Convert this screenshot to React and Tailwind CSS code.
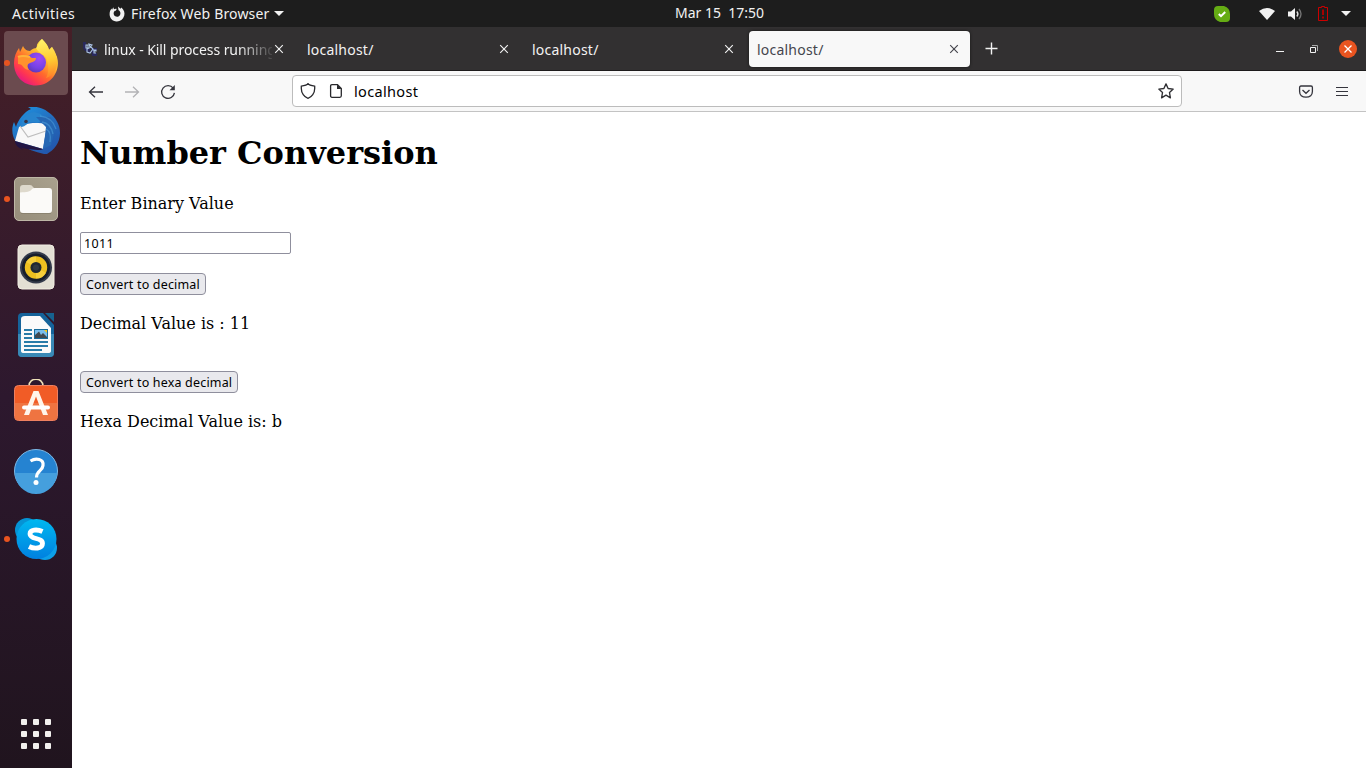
import React from 'react';

const UI = 'font-["Noto_Sans",sans-serif]';

function DockItem({ children, running, active }) {
  return (
    <div className="relative flex h-[68px] w-[72px] shrink-0 items-center justify-center">
      {active && <span className="absolute left-1 top-0.5 h-16 w-16 rounded bg-[#6b4b4f]" />}
      {running && <span className="absolute left-1 top-[31px] h-1.5 w-1.5 rounded-full bg-[#e95420]" />}
      <svg className="relative h-12 w-12" viewBox="0 0 48 48" fill="none">{children}</svg>
    </div>
  );
}

function Firefox() {
  return (
    <>
      <defs>
        <linearGradient id="ffBody" x1="40" y1="6" x2="10" y2="44" gradientUnits="userSpaceOnUse">
          <stop stopColor="#fff44f" />
          <stop offset=".3" stopColor="#ffbd2f" />
          <stop offset=".58" stopColor="#ff6b2c" />
          <stop offset=".8" stopColor="#ff3750" />
          <stop offset="1" stopColor="#e31587" />
        </linearGradient>
        <radialGradient id="ffGlobe" cx=".65" cy=".3" r=".8">
          <stop stopColor="#a04af5" />
          <stop offset=".6" stopColor="#7542e5" />
          <stop offset="1" stopColor="#5b35b0" />
        </radialGradient>
        <linearGradient id="ffTail" x1="32" y1="0" x2="40" y2="36" gradientUnits="userSpaceOnUse">
          <stop stopColor="#fff36b" />
          <stop offset=".6" stopColor="#ffc931" />
          <stop offset="1" stopColor="#ff8a2a" />
        </linearGradient>
      </defs>
      <path d="M30 0C33 3 36 6 37 11L40 8C41 11 43 14 45 18C49 32 39 46.500 24 46.500C11 46.500 2 37 2 24C2 18 4 13 7 9L8 13L11 7C12 9 14 12 18 12C20 10 22 9 25 9C24 6 26 3 30 0Z" fill="url(#ffBody)" />
      <path d="M30 0C33 4 36 6 37 11L40 8C49 20 46 35 34 39C38 32 36 23 34 18C30 15 26 13 24 9C26 7 27 3 30 0Z" fill="url(#ffTail)" />
      <circle cx="24" cy="23.500" r="10" fill="url(#ffGlobe)" />
      <path d="M6 19C12 14 17 17 20 19L24 19C24 22 21 23 18 24C15 25 15 28 17 31C10 30 12 25 6 25Z" fill="#ff922d" />
      <path d="M6 18C10 16 14 17 18 18" stroke="#ffb13b" strokeWidth="2" />
    </>
  );
}

function Thunderbird() {
  return (
    <>
      <defs>
        <linearGradient id="tbBody" x1="12" y1="2" x2="40" y2="44" gradientUnits="userSpaceOnUse">
          <stop stopColor="#1e8cdb" />
          <stop offset=".5" stopColor="#2469ba" />
          <stop offset="1" stopColor="#2257ad" />
        </linearGradient>
      </defs>
      <path d="M19 2L16 0C22-1 30 0 36 5C44 10 48 18 48 26C48 36 42 43 35 47L32 47C23 45 15 42 8 37L5 36C0 30-1 22 2 15L4 20C6 13 12 5 19 2Z" fill="url(#tbBody)" />
      <path d="M3 34L7 20L13 18C18 15 29 16 34 17L34 24L31 42Z" fill="#f8f8f8" />
      <path d="M8 19L16 30L34 24" stroke="#bdbdbd" strokeWidth="1.2" />
      <path d="M3 34L31 42L29 43C20 43 12 42 8 40L12 43C6 41 3 38 3 34Z" fill="#211544" />
      <path d="M9 20C9 12 14 6 22 5L29 7C31 11 29 15 25 16C19 14 16 15 15 17C13 19 11 20 9 20Z" fill="#2784ce" />
      <circle cx="14" cy="14.500" r="1.800" fill="#373448" />
      <path d="M24 10L39 10L43 23L39 38L31 42L33 29L34 20L29 15Z" fill="#2567b4" />
      <path d="M28 9C37 10 42 15 44 22M30 15C37 16 40 22 41 27M34 22C38 24 39 29 38 35" stroke="#4b9bd9" strokeWidth="1.300" opacity=".6" />
    </>
  );
}

function Files() {
  return (
    <>
      <defs><linearGradient id="filesBg" x1="0" y1="48" x2="48" y2="0" gradientUnits="userSpaceOnUse"><stop stopColor="#958c79" /><stop offset="1" stopColor="#aaa28f" /></linearGradient></defs>
      <rect x="2.5" y="2.5" width="43" height="43" rx="4.5" fill="url(#filesBg)" stroke="#beb7a6" />
      <path d="M8 13Q8 10 11 10H18Q20 10 21 12L23 14H30V25H8Z" fill="#ded9cc" />
      <path d="M8 17.5C15 17 18 17 20 14Q21 13 23 13H37Q40 13 40 16V35Q40 38 37 38H11Q8 38 8 35Z" fill="#fbfaf8" />
      <path d="M9 38.5H39" stroke="#817967" opacity=".65" />
    </>
  );
}

function Rhythmbox() {
  return (
    <>
      <rect x="6" y="2" width="36" height="44" rx="4" fill="#e3dfd4" stroke="#f2eee3" />
      <circle cx="24" cy="24.5" r="16" fill="#343b4b" />
      <circle cx="24" cy="24.5" r="14" fill="#171e2b" />
      <circle cx="24" cy="24.5" r="11.2" fill="#edc020" />
      <path d="M14 19A11 11 0 0 1 24 13.4L24 24ZM34 30A11 11 0 0 1 24 35.5L24 24Z" fill="#fbd94e" opacity=".6" />
      <circle cx="24" cy="24.5" r="5.5" fill="#202831" />
      <circle cx="24" cy="24.5" r="3" fill="#303941" />
    </>
  );
}

function Writer() {
  return (
    <>
      <path d="M10 2H31L42 14V42Q42 46 38 46H10Q6 46 6 42V6Q6 2 10 2Z" fill="#15639a" />
      <path d="M6 23H42V42Q42 46 38 46H10Q6 46 6 42Z" fill="#3989b6" />
      <path d="M13 5H28L39 17V40Q39 42 36 42H12Q9 42 9 40V8Q9 5 13 5Z" fill="#fafafa" />
      <path d="M33 2H42V11Z" fill="#16628f" />
      <path d="M12 19H20M12 23H20M12 27H20M12 31H36M12 35H36M12 39H30" stroke="#287ba8" strokeWidth="2" />
      <rect x="22.5" y="18.5" width="13" height="9" fill="#78bdec" stroke="#176b9a" />
      <path d="M23 27V24L27 20.5L29 24L31 22L35 26V27Z" fill="#404950" />
      <path d="M32 19H35V22Z" fill="#f6c61b" />
    </>
  );
}

function Software() {
  return (
    <>
      <path d="M17 9V7C17-2 31-2 31 7V9" stroke="#eee1b8" strokeWidth="1.6" />
      <rect x="2.5" y="6.5" width="43" height="35" rx="4" fill="#f15c26" stroke="#ee8060" />
      <path d="M3 24H45V38Q45 41 42 41H6Q3 41 3 38Z" fill="#ef7441" />
      <path d="M21.5 12H26.5L36 36H31L24 17.5L17 36H12Z" fill="#fff5ea" />
      <rect x="10" y="26.5" width="28" height="4" rx="2" fill="#fff" />
    </>
  );
}

function Help() {
  return (
    <>
      <circle cx="24" cy="24" r="21.5" fill="#2583d1" stroke="#7db9e6" />
      <path d="M3 26H45A21 21 0 0 1 3 26Z" fill="#459fdd" />
      <path d="M18.5 14C24 10.500 32 12 31 18.5C30.500 24 24.5 23.5 24.5 30.5" stroke="#fff" strokeWidth="3.200" />
      <circle cx="24" cy="35.500" r="2.500" fill="#fff" />
    </>
  );
}

function Skype() {
  return (
    <>
      <defs><linearGradient id="skypeBlue" x1="0" y1="0" x2="0" y2="1"><stop stopColor="#00b8f0" /><stop offset="1" stopColor="#0080e0" /></linearGradient></defs>
      <circle cx="15" cy="15" r="12" fill="#0593d4" />
      <circle cx="33" cy="33" r="12" fill="#0c9fe8" />
      <circle cx="24.500" cy="24" r="20" fill="url(#skypeBlue)" />
      <path d="M30.500 16.5C25 14 18 14.5 18 19C18 25 30.500 22 30.500 28.5C30.500 34 22 34 17 31.5" stroke="#fff" strokeWidth="4.8" />
    </>
  );
}

function Close({ className = '' }) {
  return <svg className={`h-2.5 w-2.5 ${className}`} viewBox="0 0 10 10"><path d="M1.2 1.2L8.8 8.8M8.8 1.2L1.2 8.8" stroke="currentColor" strokeWidth="1.15" /></svg>;
}

function TopBar() {
  return (
    <header className={`${UI} grid h-[27px] shrink-0 grid-cols-[1fr_auto_1fr] items-center bg-[#1d1d1d] text-[14px] leading-[26px] text-[#f2f2f2]`}>
      <div className="flex items-center pl-3">
        <span className="w-[97px] whitespace-nowrap tracking-[0.5px]">Activities</span>
        <svg className="h-4 w-4" viewBox="0 0 16 16"><path d="M4.2 1.3L5 3.2C6 2.6 7 2.5 7.7 2.9L6.8 4.8H5.8C4.6 6 4.3 7.5 5 9C6 11 9.2 11.4 10.7 9.5C12.2 7.3 11.2 5 9.5 4.2L9 .6L11.5 2.800L12.4 1.6C15.2 4 16 7 15.2 9.8C14 13.6 11 15.7 7.5 15.5C3.5 15.2.7 12.2.6 8.2C.6 6 1.3 4 2.5 2.5L3 4Z" fill="#f2f2f2" /></svg>
        <span className="ml-[6px] w-[138px] whitespace-nowrap tracking-[0.16px]">Firefox Web Browser</span>
        <svg className="ml-[5px] h-[5px] w-[10px]" viewBox="0 0 10 5"><path d="M0 0H10L5 5Z" fill="#f2f2f2" /></svg>
      </div>
      <div className="whitespace-pre pl-[73px] text-center -mt-px">Mar 15  17:50</div>
      <div className="flex items-center justify-end pr-[15px]">
        <svg className="mr-[29px] h-4 w-4" viewBox="0 0 16 16"><path d="M4 0H10Q16 2 16 8V12Q16 16 12 16H6Q0 14 0 8V4Q0 0 4 0Z" fill="#65ac14" /><path d="M4.8 8L7 10.2L11.2 6" stroke="#fff" strokeWidth="2" fill="none" /></svg>
        <svg className="mr-[13px] h-3 w-4" viewBox="0 0 16 12"><path d="M0 3Q8-3 16 3L8 12Z" fill="#f2f2f2" /></svg>
        <svg className="mr-[15px] h-[14px] w-[15px]" viewBox="0 0 15 14"><path d="M0 4.5H3L7 1V13L3 9.5H0Z" fill="#f2f2f2" /><path d="M8.8 4.5Q11 7 8.8 9.5" stroke="#ddd" strokeWidth="1.4" fill="none" /><path d="M11 2Q15 7 11 12" stroke="#777" strokeWidth="1.3" fill="none" /></svg>
        <svg className="mr-[13px] h-[15px] w-[10px]" viewBox="0 0 10 15"><path d="M3.5 1.5V.5H6.5V1.5H9.5V14.5H.5V1.5Z" fill="none" stroke="#cc0000" /><path d="M4 3.500H6V9H4ZM4 10.5H6V12.5H4Z" fill="#a80000" /></svg>
        <svg className="h-[5px] w-[10px]" viewBox="0 0 10 5"><path d="M0 0H10L5 5Z" fill="#f2f2f2" /></svg>
      </div>
    </header>
  );
}

function Tab({ active }) {
  return (
    <div className={`mr-1 flex h-9 w-[221px] shrink-0 items-center rounded pl-2 pr-[11px] ${active ? 'bg-[#f8f8f8] text-[#45454d] shadow-[0_0_3px_#151515]' : 'text-[#f2f2f2]'}`}>
      <span className="flex-1 whitespace-nowrap pt-0.5 tracking-[0.22px]">localhost/</span>
      <Close />
    </div>
  );
}

function TabStrip() {
  return (
    <div className={`${UI} flex h-11 shrink-0 items-center border-b border-[#1d1b1c] bg-[#323031] pl-0.5 text-[14px] leading-5`}>
      <div className="mr-1 flex h-9 w-[221px] shrink-0 items-center pl-2 pr-[11px] text-[#f2f2f2]">
        <svg className="mr-[6px] h-4 w-4 shrink-0" viewBox="0 0 16 16"><path d="M1 1H4V6Q4 8 7 8H8V11Q1 11 1 6ZM9 7H15V9H12V12H15V15H10Z" fill="#29295c" /><path d="M4 4H6V7H4ZM7 3L10 4L8 6ZM5 8L9 6L11 8L8 12L5 11ZM11 9H14V10H12V12H14" fill="none" stroke="#acc4e5" strokeWidth="1.1" /></svg>
        <span className="w-[168px] overflow-hidden whitespace-nowrap pt-0.5 tracking-[-0.07px] [mask-image:linear-gradient(to_right,black_134px,transparent_172px)]">linux - Kill process running</span>
        <Close className="ml-auto shrink-0" />
      </div>
      <Tab /><Tab /><Tab active />
      <svg className="ml-[10px] mt-px h-4 w-4 text-[#f2f2f2]" viewBox="0 0 16 16"><path d="M7.5 1.500V13.500M1.5 7.500H13.5" stroke="currentColor" strokeWidth="1.4" /></svg>
      <div className="ml-auto flex items-center pr-[9px] text-[#f2f2f2]">
        <svg className="mr-[26px] h-2 w-2" viewBox="0 0 8 8"><path d="M0 6.5H8" stroke="currentColor" /></svg>
        <svg className="mr-[21px] h-2 w-2" viewBox="0 0 8 8"><path d="M.5 2.5H5.5V7.5H.5Z" stroke="currentColor" fill="none" /><path d="M2 .5H7.5V6" stroke="#aaa" fill="none" /></svg>
        <span className="flex h-[18px] w-[18px] items-center justify-center rounded-full bg-[#e95420]">
          <svg className="h-2 w-2" viewBox="0 0 8 8"><path d="M.5 .5L7.5 7.5M7.5 .5L.5 7.5" stroke="#fff" strokeWidth="1.3" /></svg>
        </span>
      </div>
    </div>
  );
}

function Toolbar() {
  return (
    <div className={`${UI} flex h-[41px] shrink-0 items-center border-b border-[#c3c3c3] bg-[#f8f8f8] pl-4 pt-px text-[#35353d]`}>
      <svg className="h-4 w-4" viewBox="0 0 16 16" fill="none" stroke="currentColor" strokeWidth="1.3"><path d="M15 8H1.5M7 2.8L1.5 8L7 13.2" /></svg>
      <svg className="ml-5 h-4 w-4 text-[#b2b2b5]" viewBox="0 0 16 16" fill="none" stroke="currentColor" strokeWidth="1.3"><path d="M1 8H14.5M9 2.8L14.5 8L9 13.2" /></svg>
      <svg className="ml-5 h-4 w-4" viewBox="0 0 16 16" fill="none"><path d="M13.2 4.2A6.4 6.4 0 1 0 14.4 8.8" stroke="currentColor" strokeWidth="1.3" /><path d="M14.8 1V6.3H9.5Z" fill="currentColor" /></svg>
      <div className="-mt-px ml-[116px] flex h-8 w-[890px] items-center rounded border border-[#bcbcbc] bg-white pl-[7px] text-black">
        <svg className="h-4 w-4" viewBox="0 0 16 16" fill="none" stroke="#29292d" strokeWidth="1.3"><path d="M8 .7Q6.8 2.5 1.3 3.2V5.4C1.3 10 4.2 14.2 8 15.3C11.8 14.2 14.7 10 14.7 5.4V3.2Q9.2 2.5 8 .7Z" /></svg>
        <svg className="ml-3 h-4 w-4" viewBox="0 0 16 16" fill="none"><path d="M3.5 1.7H9.5L13.3 5.5V12.8Q13.3 14.3 11.8 14.3H4Q2.6 14.3 2.6 12.8V3Q2.6 1.7 4 1.7Z" stroke="#29292d" strokeWidth="1.3" /><path d="M9 1.5L13.5 6H9Z" fill="#29292d" /></svg>
        <span className="ml-[10px] text-[14.5px] leading-5 tracking-[0.33px]">localhost</span>
        <svg className="ml-auto mr-[7px] h-4 w-4" viewBox="0 0 16 16" fill="none" stroke="#303034" strokeWidth="1.35" strokeLinejoin="round"><path d="M8 .9L10.1 5.5L15.2 6.1L11.5 9.6L12.4 14.8L8 12.2L3.6 14.8L4.5 9.6L.8 6.1L5.9 5.5Z" /></svg>
      </div>
      <svg className="ml-[116px] h-4 w-4" viewBox="0 0 16 16" fill="none" stroke="currentColor" strokeWidth="1.3"><path d="M3 2H13Q14.4 2 14.4 3.5V7.5C14.4 11 12 13.200 8 13.200S1.6 11 1.6 7.5V3.5Q1.6 2 3 2Z" /><path d="M4.5 6L8 9.3L11.5 6" /></svg>
      <svg className="ml-5 h-4 w-4" viewBox="0 0 16 16"><path d="M2 3.5H14M2 7.5H14M2 11.5H14" stroke="currentColor" strokeWidth="1.1" /></svg>
    </div>
  );
}

const button = 'mt-[19px] h-[22px] rounded-[4px] border border-[#8f8f9d] bg-[#e9e9ed] pl-[5px] pt-px text-left font-["Noto_Sans",sans-serif] text-[12.5px] leading-5 whitespace-nowrap tracking-[0.18px]';

export default function App() {
  return (
    <div className="flex h-screen w-screen flex-col overflow-hidden bg-white text-black">
      <TopBar />
      <div className="flex min-h-0 flex-1">
        <nav className="flex w-[72px] shrink-0 flex-col bg-linear-to-b from-[#451f27] via-[#2d182e] to-[#20141e] pt-0.5">
          <DockItem active running><Firefox /></DockItem>
          <DockItem><Thunderbird /></DockItem>
          <DockItem running><Files /></DockItem>
          <DockItem><Rhythmbox /></DockItem>
          <DockItem><Writer /></DockItem>
          <DockItem><Software /></DockItem>
          <DockItem><Help /></DockItem>
          <DockItem running><Skype /></DockItem>
          <div className="mb-[19px] mt-auto grid grid-cols-3 gap-1.5 self-center">
            {Array.from({ length: 9 }, (_, i) => <span key={i} className="h-1.5 w-1.5 rounded-[1px] bg-[#f2f0ee]" />)}
          </div>
        </nav>
        <div className="flex min-w-0 flex-1 flex-col">
          <TabStrip />
          <Toolbar />
          <main className='flex flex-1 flex-col items-start px-2 font-["DejaVu_Serif",serif] text-base leading-[19px]'>
            <h1 className="mt-[23px] text-[32px] font-bold leading-[37px] whitespace-nowrap">Number Conversion</h1>
            <p className="mt-[22px]">Enter Binary Value</p>
            <input className='mt-[19px] h-[22px] w-[211px] rounded-[2px] border border-[#8f8f9d] bg-white px-[3px] font-["Noto_Sans",sans-serif] text-[12.5px] leading-5 tracking-[0.35px]' defaultValue="1011" />
            <button className={`${button} w-[126px]`}>Convert to decimal</button>
            <p className="mt-[19px]">Decimal Value is : 11</p>
            <button className={`${button} !mt-[38px] w-[158px]`}>Convert to hexa decimal</button>
            <p className="mt-[19px]">Hexa Decimal Value is: b</p>
          </main>
        </div>
      </div>
    </div>
  );
}
